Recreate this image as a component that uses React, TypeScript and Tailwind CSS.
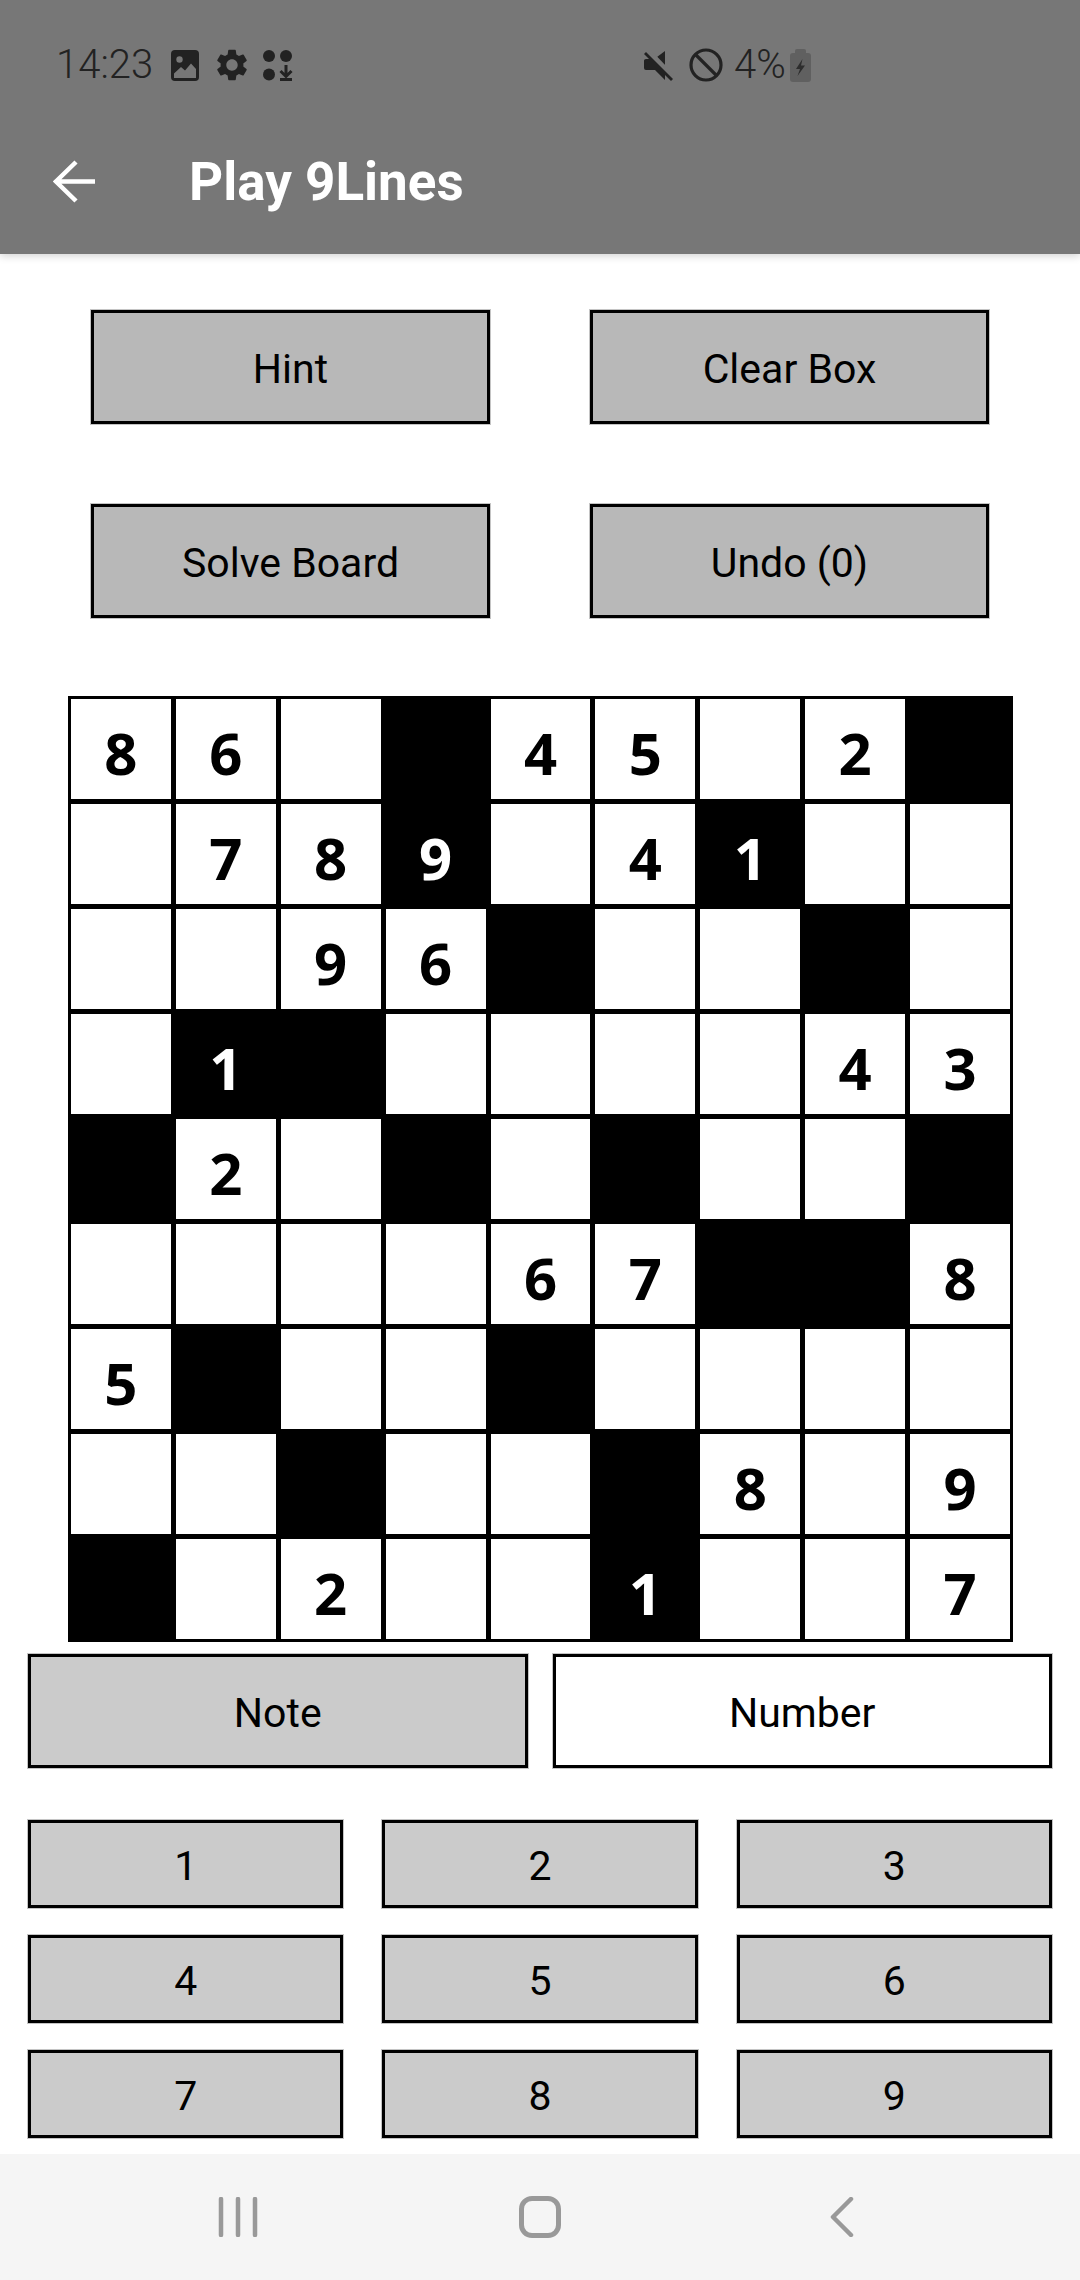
import React from "react";
import { MdSettings } from "react-icons/md";

// "#" is a black cell, "#9" a black cell holding a white digit
const BOARD: string[][] = [
    ["8", "6", "", "#", "4", "5", "", "2", "#"],
    ["", "7", "8", "#9", "", "4", "#1", "", ""],
    ["", "", "9", "6", "#", "", "", "#", ""],
    ["", "#1", "#", "", "", "", "", "4", "3"],
    ["#", "2", "", "#", "", "#", "", "", "#"],
    ["", "", "", "", "6", "7", "#", "#", "8"],
    ["5", "#", "", "", "#", "", "", "", ""],
    ["", "", "#", "", "", "#", "8", "", "9"],
    ["#", "", "2", "", "", "#1", "", "", "7"],
];

const StatusBar: React.FC = () => (
    <div className="flex h-[40px] items-center pl-[56px] text-[40px] font-[350] text-[#222222]">
        <div className="flex w-[588px] items-center">
            <span className="w-[115px]">14:23</span>
            <svg width="28" height="31" viewBox="0 0 28 31">
                <rect width="28" height="31" rx="4" fill="#222" />
                <circle cx="8.5" cy="9.5" r="3.2" fill="#777" />
                <path d="M3 28V23.5L10 17L14 20.5L20 13.5L25 19V28Z" fill="#777" />
            </svg>
            <MdSettings size={38} color="#222" className="ml-[14px]" />
            <svg width="30" height="31" viewBox="0 0 30 31" className="ml-[12px]" fill="#222">
                <circle cx="6" cy="6" r="6" />
                <circle cx="23" cy="6" r="6" />
                <circle cx="6" cy="24.5" r="6" />
                <path d="M23 15V26M17.5 21L23 26.5L28.5 21" fill="none" stroke="#222" strokeWidth="3" />
                <rect x="17" y="28" width="12" height="3" />
            </svg>
        </div>
        <div className="flex items-center">
            <svg width="30" height="31" viewBox="0 0 30 31" fill="#222">
                <path d="M13 7L21 1V17ZM0 10.5Q0 9 2 9H7L21 23V30L11 20H2Q0 20 0 18Z" />
                <path d="M5 0L30 26" stroke="#777" strokeWidth="2.5" />
                <path d="M1 3L28 30" stroke="#222" strokeWidth="2.8" />
            </svg>
            <svg width="34" height="34" viewBox="0 0 34 34" fill="none" stroke="#222" strokeWidth="3.2" className="ml-[15px]">
                <circle cx="17" cy="17" r="15" />
                <path d="M6.5 6.5L27.5 27.5" />
            </svg>
            <span className="ml-[11px] w-[56px]">4%</span>
            <svg width="21" height="33" viewBox="0 0 21 33">
                <path d="M7 0H14A2 2 0 0 1 16 2V4H18A3 3 0 0 1 21 7V30A3 3 0 0 1 18 33H3A3 3 0 0 1 0 30V7A3 3 0 0 1 3 4H5V2A2 2 0 0 1 7 0Z" fill="#606060" />
                <path d="M12.5 10L6 20H10L7.5 27L15 16.5H11Z" fill="#2d2d2d" />
            </svg>
        </div>
    </div>
);

const Header: React.FC = () => (
    <div className="relative h-[254px] bg-[#777777] pt-[45px] shadow-[0_2px_8px_rgba(0,0,0,0.18)]">
        <StatusBar />
        <div className="mt-[51px] flex h-[90px] items-center pl-[53px]">
            <svg width="42" height="43" viewBox="0 0 42 43" fill="none" stroke="white" strokeWidth="4.5">
                <path d="M42 21.5H3M23 2L3 21.5L23 41" />
            </svg>
            <span className="ml-[94px] pt-[4px] text-[53px] font-bold text-white">Play 9Lines</span>
        </div>
    </div>
);

const Btn: React.FC<{ label: string; className: string }> = ({ label, className }) => (
    <button
        type="button"
        className={`flex items-center justify-center border-[3px] border-black pt-[5px] text-[41px] text-black shadow-[0_0_0_1px_#c4c4c4] ${className}`}
    >
        {label}
    </button>
);

const Board: React.FC = () => (
    <div className="ml-[68px] mt-[78px] grid h-[946px] w-[945px] grid-cols-9 grid-rows-9 gap-[5px] bg-black p-[3px] font-['Noto_Sans',sans-serif]">
        {BOARD.flat().map((cell, i) => {
            const black = cell.startsWith("#");
            return (
                <div
                    key={i}
                    className={`flex items-center justify-center pt-[8px] text-[58px] font-bold leading-none ${black ? "bg-black text-white" : "bg-white text-black"}`}
                >
                    {cell.replace("#", "")}
                </div>
            );
        })}
    </div>
);

const NavBar: React.FC = () => (
    <div className="flex h-[126px] items-center justify-center bg-[#f5f5f5]">
        <div className="flex w-[302px] justify-center">
            <svg width="40" height="40" viewBox="0 0 40 40" stroke="#999" strokeWidth="4.5" strokeLinecap="round">
                <path d="M3 2V38M20 2V38M37 2V38" />
            </svg>
        </div>
        <div className="flex w-[302px] justify-center">
            <div className="h-[42px] w-[42px] rounded-[13px] border-[5px] border-[#999]" />
        </div>
        <div className="flex w-[302px] justify-center">
            <svg width="24" height="40" viewBox="0 0 24 40" fill="none" stroke="#999" strokeWidth="4.5" strokeLinecap="round" strokeLinejoin="round">
                <path d="M21 2L3 20L21 38" />
            </svg>
        </div>
    </div>
);

export default function App() {
    return (
        <div className="flex h-[2280px] w-[1080px] flex-col bg-white font-['Roboto',sans-serif]">
            <Header />
            <div className="flex-1">
                <div className="mt-[56px] flex gap-[100px] pl-[91px]">
                    <Btn label="Hint" className="h-[114px] w-[399px] bg-[#b8b8b8]" />
                    <Btn label="Clear Box" className="h-[114px] w-[399px] bg-[#b8b8b8]" />
                </div>
                <div className="mt-[80px] flex gap-[100px] pl-[91px]">
                    <Btn label="Solve Board" className="h-[114px] w-[399px] bg-[#b8b8b8]" />
                    <Btn label="Undo (0)" className="h-[114px] w-[399px] bg-[#b8b8b8]" />
                </div>
                <Board />
                <div className="mt-[12px] grid grid-cols-2 gap-[25px] px-[28px]">
                    <Btn label="Note" className="h-[114px] bg-[#cbcbcb]" />
                    <Btn label="Number" className="h-[114px] bg-white" />
                </div>
                <div className="mt-[52px] grid grid-cols-3 gap-x-[39px] gap-y-[27px] px-[28px]">
                    {["1", "2", "3", "4", "5", "6", "7", "8", "9"].map((n) => (
                        <Btn key={n} label={n} className="h-[88px] bg-[#cbcbcb]" />
                    ))}
                </div>
            </div>
            <NavBar />
        </div>
    );
}
